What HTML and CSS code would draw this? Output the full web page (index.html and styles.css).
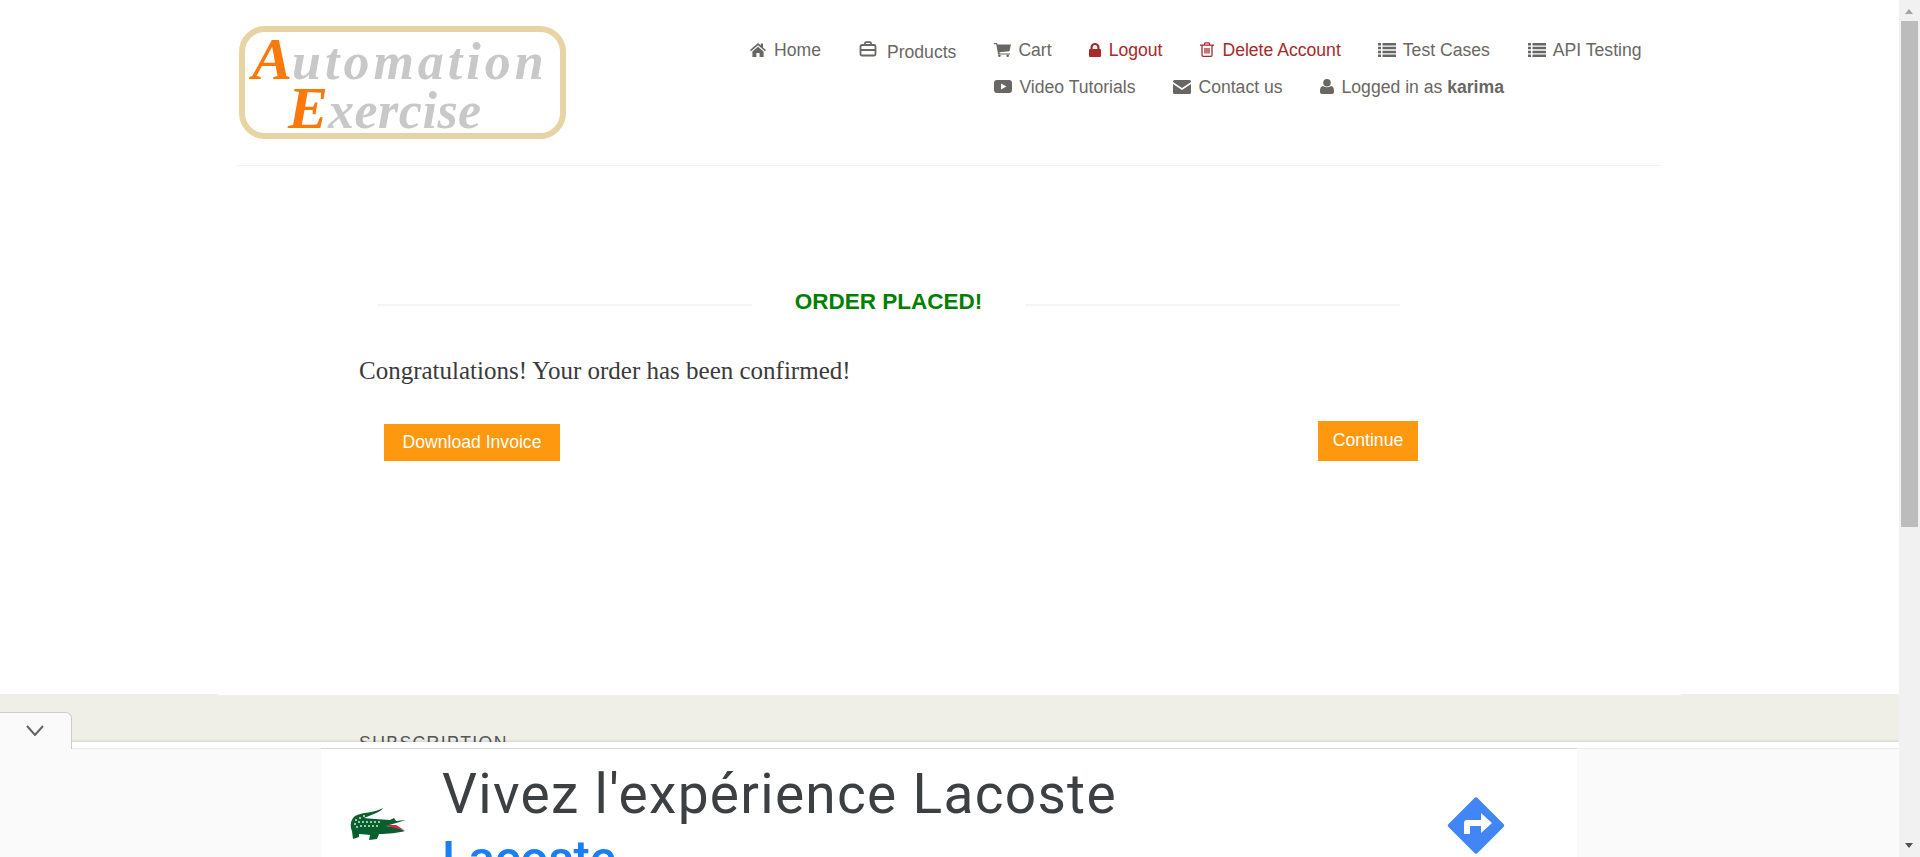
FILE: index.html
```html
<!DOCTYPE html>
<html lang="en">
<head>
    <meta charset="UTF-8">
    <title>Automation Exercise - Order Placed</title>
    <link rel="stylesheet" href="styles.css">
</head>
<body>
    <div class="page">
        <header class="header">
            <a class="logo" href="#">
                <span class="logo-line"><b class="logo-cap">A</b>utomation</span>
                <span class="logo-line logo-line-two"><b class="logo-cap">E</b>xercise</span>
            </a>
            <ul class="menu">
                <li class="menu-wide"><a href="#"><svg class="icon icon-home" viewBox="0 0 16 14"><path d="M8 0 0 7l1 1.2L8 2.2l7 6L16 7l-3-2.6V.6h-2.2v1.9zM2.4 8.6V14h4V10h3.2v4h4V8.6L8 3.8z"/></svg>Home</a></li>
                <li class="menu-tall"><a href="#"><svg class="icon icon-case" viewBox="0 0 17 16"><path d="M5.5 4V2.2q0-1 1-1h4q1 0 1 1V4M2.5 4h12q1.500 0 1.500 1.500v7.500q0 1.500-1.500 1.500h-12q-1.500 0-1.500-1.500V5.500Q1 4 2.500 4zM1 9h15" fill="none" stroke="currentColor" stroke-width="1.800"/></svg><span class="menu-low">Products</span></a></li>
                <li><a href="#"><svg class="icon icon-cart" viewBox="0 0 17 14"><path d="M0 0h3l.6 1.600H17l-1.600 6.600-10 1 .3 1.200h10.300v1.200H4.200L2.200 1.300H0z"/><circle cx="5.400" cy="12.700" r="1.300"/><circle cx="13.700" cy="12.700" r="1.300"/></svg>Cart</a></li>
                <li class="menu-red menu-wide"><a href="#"><svg class="icon icon-lock" viewBox="0 0 12 14"><path d="M1.500 6V4.200a4.500 4.200 0 0 1 9 0V6h.5q1 0 1 1v6q0 1-1 1H1q-1 0-1-1V7q0-1 1-1zm2.200 0h4.600V4.200a2.300 2.200 0 0 0-4.600 0z"/></svg>Logout</a></li>
                <li class="menu-red menu-narrow"><a href="#"><svg class="icon icon-trash" viewBox="0 0 14 15"><path d="M0 3.200h14M4.500 3V1.800q0-1 1-1h3q1 0 1 1V3M2 3.200v9.800q0 1.300 1.300 1.300h7.400q1.300 0 1.300-1.300V3.200M5 6v5.600M7 6v5.600M9 6v5.600" fill="none" stroke="currentColor" stroke-width="1.300"/></svg>Delete Account</a></li>
                <li><a href="#"><svg class="icon icon-list" viewBox="0 0 18 14"><path d="M0 0h3v2.500H0zM4.500 0H18v2.500H4.500zM0 3.800h3v2.500H0zM4.500 3.800H18v2.500H4.500zM0 7.700h3v2.500H0zM4.500 7.700H18v2.500H4.500zM0 11.500h3V14H0zM4.500 11.500H18V14H4.500z"/></svg>Test Cases</a></li>
                <li><a href="#"><svg class="icon icon-list" viewBox="0 0 18 14"><path d="M0 0h3v2.500H0zM4.500 0H18v2.500H4.500zM0 3.800h3v2.500H0zM4.500 3.800H18v2.500H4.500zM0 7.700h3v2.500H0zM4.500 7.700H18v2.500H4.500zM0 11.500h3V14H0zM4.500 11.500H18V14H4.500z"/></svg>API Testing</a></li>
                <li><a href="#"><svg class="icon icon-play" viewBox="0 0 18 13"><path fill-rule="evenodd" d="M3 0h12q3 0 3 3v7q0 3-3 3H3q-3 0-3-3V3q0-3 3-3zm4 3.500v6l5.500-3z"/></svg>Video Tutorials</a></li>
                <li><a href="#"><svg class="icon icon-mail" viewBox="0 0 18 14"><path d="M1.500 0h15Q18 0 18 1.500v.6L9 8 0 2.100v-.6Q0 0 1.500 0zM0 4l9 5.900L18 4v8.500Q18 14 16.500 14h-15Q0 14 0 12.500z"/></svg>Contact us</a></li>
                <li><a href="#"><svg class="icon icon-user" viewBox="0 0 14 15"><circle cx="7" cy="3.800" r="3.800"/><path d="M3 7q4 2.500 8 0 3 .6 3 5v1q0 2-2 2H2q-2 0-2-2v-1q0-4.400 3-5z"/></svg><span>Logged in as&nbsp;<b>karima</b></span></a></li>
            </ul>
        </header>

        <main class="order">
            <div class="order-title">
                <span class="order-rule"></span>
                <h2>ORDER PLACED!</h2>
                <span class="order-rule"></span>
            </div>
            <p class="order-text">Congratulations! Your order has been confirmed!</p>
            <div class="order-actions">
                <a class="btn btn-invoice" href="#">Download Invoice</a>
                <a class="btn btn-continue" href="#">Continue</a>
            </div>
        </main>

        <footer class="footer">
            <div class="footer-notch"></div>
            <h3>SUBSCRIPTION</h3>
        </footer>

        <!-- bottom anchor ad -->
        <aside class="anchor-ad">
            <div class="ad-tab">
                <svg viewBox="0 0 18 11"><path d="M1 1l8 9 8-9" fill="none" stroke="#5f6368" stroke-width="2"/></svg>
            </div>
            <div class="ad-box">
                <div class="ad-creative">
                    <svg class="ad-croc" viewBox="0 0 56 34">
                        <path fill="#05602f" d="M33 1C25 6 12 5 5 9 0 13 0 20 2 24l1 8 6-2v-3c5 0 9 1 11 1l-1 5 8-1 2-5c9 0 19-1 26-3l-9-4-10-1 20-6-10 1-2-3-4 2c-10-1-20-1-26-2 6-3 16-5 19-10z"/>
                        <path fill="#d9213c" d="M35 18h11l8 5-10-2z"/>
                        <g fill="#d8e4c8">
                            <circle cx="6" cy="13" r="1"/><circle cx="10" cy="11" r="1"/><circle cx="14" cy="9" r="1"/>
                            <circle cx="5" cy="17" r="1"/><circle cx="9" cy="15" r="1"/><circle cx="13" cy="15" r="1"/><circle cx="17" cy="15" r="1"/><circle cx="21" cy="15" r="1"/><circle cx="25" cy="15" r="1"/><circle cx="29" cy="15" r="1"/>
                            <circle cx="7" cy="20" r="1"/><circle cx="11" cy="19" r="1"/><circle cx="15" cy="19" r="1"/><circle cx="19" cy="19" r="1"/><circle cx="23" cy="19" r="1"/><circle cx="27" cy="19" r="1"/>
                        </g>
                    </svg>
                    <div class="ad-copy">
                        <div class="ad-head">Vivez l'expérience Lacoste</div>
                        <div class="ad-brand">Lacoste</div>
                    </div>
                    <svg class="ad-go" viewBox="0 0 58 57">
                        <path fill="#4285f4" d="M27 1.500q2-2.500 4 0l25.500 25.500q1.500 1.500 0 3L31 55.500q-2 2.500-4 0L1.500 30q-1.500-1.500 0-3z"/>
                        <path fill="#fff" d="M17 37V26q0-3 3-3h14v-7l11 10-11 10v-7H23v8z"/>
                    </svg>
                </div>
            </div>
        </aside>
    </div>

    <div class="scrollbar">
        <span class="scroll-up"></span>
        <span class="scroll-thumb"></span>
        <span class="scroll-down"></span>
    </div>
</body>
</html>
```

FILE: styles.css
```css
html, body {
    height: 100%;
}
body {
    margin: 0;
    display: flex;
    overflow: hidden;
    background-color: #fff;
    color: #696763;
    font-family: "Liberation Sans", Arial, sans-serif;
    font-size: 17.6px;
}
a {
    color: inherit;
    text-decoration: none;
}
.page {
    flex: 1;
    min-width: 0;
    height: 857px;
    overflow: hidden;
}

/* header */
.header {
    margin: 0 238px 0 236px;
    height: 165px;
    border-bottom: 1px solid #f3f3f1;
    display: flex;
    justify-content: space-between;
}
.logo {
    margin: 26px 0 0 3px;
    width: 327px;
    height: 113px;
    box-sizing: border-box;
    border: 6px solid #e6d4a5;
    border-radius: 26px;
    color: #c8c8c8;
    font-family: "Liberation Serif", serif;
    font-style: italic;
    font-weight: bold;
    font-size: 52px;
    letter-spacing: 4px;
    line-height: 46px;
    padding: 4px 0 0 7px;
}
.logo-line {
    display: block;
    white-space: nowrap;
}
.logo-line-two {
    padding-left: 36px;
    letter-spacing: 0.5px;
}
.logo-cap {
    color: #f97a0b;
    font-size: 60px;
    letter-spacing: 0;
}

/* menu */
.menu {
    list-style: none;
    margin: 32px -21px 0 0;
    padding: 0;
    width: 932px;
}
.menu li {
    float: left;
    height: 37px;
    margin-right: 37px;
}
.menu a {
    display: flex;
    align-items: center;
    height: 37px;
    line-height: 37px;
    white-space: nowrap;
}
.menu .menu-tall {
    height: 42px;
}
.menu .menu-wide {
    margin-right: 38px;
}
.menu .menu-narrow {
    margin-right: 36px;
}
.menu-low {
    position: relative;
    top: 2px;
    margin-left: 2px;
}
.menu-red {
    color: #a52a2a;
}
.icon {
    fill: currentColor;
    margin: -2px 8px 0 0;
    flex: none;
}
.icon-home { width: 16px; height: 14px; }
.icon-case { width: 18px; height: 16px; margin-top: -4px; }
.icon-cart { width: 17px; height: 14px; margin-left: 1px; margin-right: 7px; }
.icon-lock { width: 12px; height: 14px; }
.icon-trash { width: 14px; height: 15px; }
.icon-list { width: 18px; height: 14px; margin-left: 1px; margin-right: 7px; }
.icon-play { width: 18px; height: 13px; margin-left: 1px; margin-right: 7px; }
.icon-mail { width: 18px; height: 14px; margin-left: 1px; margin-right: 7px; }
.icon-user { width: 14px; height: 15px; }

/* order confirmation */
.order {
    margin: 0 481px 0 359px;
    height: 528px;
    padding-top: 124px;
    box-sizing: border-box;
}
.order-title {
    display: flex;
    align-items: center;
    margin: 0 18px;
}
.order-title h2 {
    margin: 0;
    padding: 0 43px;
    color: #008000;
    font-size: 22.5px;
    line-height: 24px;
    white-space: nowrap;
}
.order-rule {
    flex: 1;
    height: 2px;
    margin-top: 6px;
    background-color: #f5f5f5;
}
.order-text {
    margin: 42px 0 0;
    color: #3a3a3a;
    font-family: "Liberation Serif", serif;
    font-size: 25px;
    line-height: 30px;
}
.order-actions {
    display: flex;
    justify-content: space-between;
    align-items: flex-end;
    margin-top: 35px;
    padding-left: 25px;
}
.btn {
    background-color: #fe980f;
    color: #fff;
    text-align: center;
}
.btn-invoice {
    width: 176px;
    height: 37px;
    line-height: 36px;
}
.btn-continue {
    width: 100px;
    height: 40px;
    line-height: 38px;
}

/* footer */
.footer {
    height: 300px;
    background-color: #efefe8;
}
.footer-notch {
    height: 1px;
    margin: 0 218px;
    background-color: #fff;
}
.footer h3 {
    margin: 0;
    padding: 38px 0 0 359px;
    font-size: 17.6px;
    font-weight: normal;
    line-height: 20px;
    letter-spacing: 1.4px;
    color: #555;
}

/* ad on top of the page */
.anchor-ad {
    position: fixed;
    left: 0;
    right: 21px;
    top: 742px;
    height: 115px;
    padding-top: 6px;
    box-sizing: border-box;
    background-color: #fff;
    box-shadow: 0 -1px 2px rgba(0, 0, 0, 0.12);
}
.ad-tab {
    position: absolute;
    z-index: 1;
    left: 0;
    top: -30px;
    width: 72px;
    height: 37px;
    box-sizing: border-box;
    padding: 12px 0 0 26px;
    background-color: #fafafa;
    border-top: 1px solid #ccc;
    border-right: 1px solid #ccc;
    border-top-right-radius: 6px;
}
.ad-tab svg {
    display: block;
    width: 18px;
    height: 11px;
}
.ad-box {
    height: 109px;
    box-sizing: border-box;
    border-top: 1px solid #ececec;
    background-color: #fafafa;
}
.ad-creative {
    width: 1256px;
    height: 109px;
    margin: -1px 0 0 321px;
    box-sizing: border-box;
    border-top: 1px solid #d5d5d5;
    background-color: #fff;
    display: flex;
    overflow: hidden;
}
.ad-croc {
    flex: none;
    width: 56px;
    height: 34px;
    margin: 58px 0 0 29px;
}
.ad-copy {
    flex: 1;
    margin-left: 36px;
    color: #3c4043;
    white-space: nowrap;
}
.ad-head {
    font-family: Roboto, sans-serif;
    font-size: 55px;
    font-weight: 450;
    letter-spacing: 1.3px;
    line-height: 64px;
    margin-top: 13px;
}
.ad-brand {
    color: #1a7ef5;
    font-family: Roboto, sans-serif;
    font-size: 49px;
    font-weight: 500;
    line-height: 50px;
    margin-top: 8px;
}
.ad-go {
    flex: none;
    width: 58px;
    height: 57px;
    margin: 48px 72px 0 0;
}

/* scrollbar */
.scrollbar {
    flex: none;
    width: 21px;
    height: 857px;
    background-color: #f1f1f1;
    position: relative;
}
.scroll-thumb {
    position: absolute;
    left: 2px;
    top: 21px;
    width: 17px;
    height: 506px;
    background-color: #bcbcbc;
}
.scroll-up, .scroll-down {
    position: absolute;
    left: 6px;
    width: 0;
    height: 0;
    border-left: 4.5px solid transparent;
    border-right: 4.5px solid transparent;
}
.scroll-up {
    top: 9px;
    border-bottom: 5px solid #a3a3a3;
}
.scroll-down {
    bottom: 9px;
    border-top: 5px solid #505050;
}
```
